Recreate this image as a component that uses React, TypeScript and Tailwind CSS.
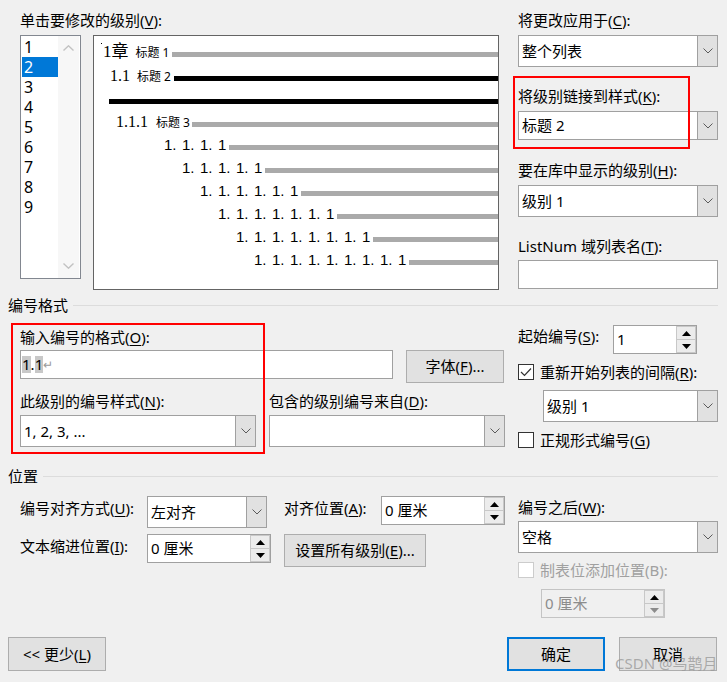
import React from 'react';

const U = ({ children }: { children: React.ReactNode }) => (
  <span className="underline underline-offset-2">{children}</span>
);

const Label = ({ children, className = '' }: { children: React.ReactNode; className?: string }) => (
  <div className={`h-[20px] whitespace-nowrap text-[15px] leading-[20px] ${className}`}>{children}</div>
);

const Chevron = () => (
  <svg width="10" height="6" viewBox="0 0 10 6">
    <path d="M0.5 0.5 L5 5 L9.5 0.5" fill="none" stroke="#5a5a5a" strokeWidth="1" />
  </svg>
);

const Combo = ({ value, className = '' }: { value: string; className?: string }) => (
  <div className={`flex border border-[#a0a0a0] bg-white ${className}`}>
    <div className="flex flex-1 items-center whitespace-nowrap pl-[3px] text-[15px]">{value}</div>
    <div className="flex w-[20px] items-center justify-center border-l border-[#a0a0a0] bg-[#e1e1e1]">
      <Chevron />
    </div>
  </div>
);

const Spin = ({ value, disabled = false, className = '' }: { value: string; disabled?: boolean; className?: string }) => (
  <div
    className={`flex border ${disabled ? 'border-[#c4c4c4] bg-[#f0f0f0] text-[#8c8c8c]' : 'border-[#a0a0a0] bg-white'} ${className}`}
  >
    <div className="flex flex-1 items-center whitespace-nowrap pl-[3px] text-[15px]">{value}</div>
    <div className="flex w-[20px] flex-col">
      <div className="flex flex-1 items-center justify-center border border-[#c8c8c8] bg-[#ececec]">
        <svg width="9" height="5" viewBox="0 0 9 5">
          <polygon points="0,5 4.5,0 9,5" fill="#000" />
        </svg>
      </div>
      <div className="flex flex-1 items-center justify-center border border-t-0 border-[#c8c8c8] bg-[#ececec]">
        <svg width="9" height="5" viewBox="0 0 9 5">
          <polygon points="0,0 4.5,5 9,0" fill={disabled ? '#8c8c8c' : '#000'} />
        </svg>
      </div>
    </div>
  </div>
);

const Btn = ({ children, className = '', primary = false }: { children: React.ReactNode; className?: string; primary?: boolean }) => (
  <button
    type="button"
    className={`flex items-center justify-center whitespace-nowrap bg-[#e1e1e1] text-[15px] ${primary ? 'border-2 border-[#0078d7]' : 'border border-[#adadad]'} ${className}`}
  >
    {children}
  </button>
);

const Check = ({ checked = false, disabled = false }: { checked?: boolean; disabled?: boolean }) => (
  <div
    className={`flex h-[16px] w-[16px] shrink-0 items-center justify-center border bg-white ${disabled ? 'border-[#cccccc]' : 'border-[#333333]'}`}
  >
    {checked && (
      <svg width="12" height="10" viewBox="0 0 12 10">
        <path d="M1 5 L4.5 8.5 L11 1.5" fill="none" stroke="#333" strokeWidth="1.2" />
      </svg>
    )}
  </div>
);

const Group = ({ title }: { title: string }) => (
  <div className="flex h-[20px] items-center pl-[8px] pr-[9px]">
    <span className="text-[15px] leading-[20px]">{title}</span>
    <div className="ml-[5px] h-px flex-1 bg-[#dcdcdc]" />
  </div>
);

const ListBox = () => (
  <div className="flex h-[244px] w-[61px] border border-[#828790] bg-white">
    <div className="flex-1 pl-[1px] pt-[1px]">
      {[1, 2, 3, 4, 5, 6, 7, 8, 9].map((n) => (
        <div
          key={n}
          className={`h-[20px] pl-[2px] text-[16px] leading-[20px] ${n === 2 ? 'bg-[#0078d7] text-white' : ''}`}
        >
          {n}
        </div>
      ))}
    </div>
    <div className="mr-[1px] flex w-[21px] flex-col items-center justify-between bg-[#f7f7f7] py-[9px]">
      <svg width="11" height="6" viewBox="0 0 11 6">
        <path d="M0.5 5.5 L5.5 0.8 L10.5 5.5" fill="none" stroke="#c2c2c2" strokeWidth="1.4" />
      </svg>
      <svg width="11" height="6" viewBox="0 0 11 6">
        <path d="M0.5 0.5 L5.5 5.2 L10.5 0.5" fill="none" stroke="#c2c2c2" strokeWidth="1.4" />
      </svg>
    </div>
  </div>
);

const deepRows = [
  { digits: 4, pad: 'pl-[70px]' },
  { digits: 5, pad: 'pl-[88px]' },
  { digits: 6, pad: 'pl-[106px]' },
  { digits: 7, pad: 'pl-[124px]' },
  { digits: 8, pad: 'pl-[142px]' },
  { digits: 9, pad: 'pl-[160px]' },
];

const Preview = () => (
  <div className="relative h-[255px] w-[406px] border border-[#646464] bg-white pt-[8px] text-black">
    <div className="absolute left-[7px] top-[7px] h-px w-px bg-black" />
    {/* level 1 */}
    <div className="flex h-[24px] items-baseline pl-[9px]">
      <span className="font-['Liberation_Serif','Noto_Sans_CJK_SC',serif] text-[17px] leading-[16px]">1章</span>
      <span className="ml-[7px] text-[12px] leading-[16px]">标题 1</span>
      <div className="ml-[3px] h-[5px] flex-1 bg-[#aaaaaa]" />
    </div>
    {/* level 2 (selected) */}
    <div className="flex h-[23px] items-baseline pl-[16px]">
      <span className="font-['Liberation_Serif',serif] text-[16px] leading-[16px]">1.1</span>
      <span className="ml-[7px] text-[12px] leading-[16px]">标题 2</span>
      <div className="ml-[3px] h-[5px] flex-1 bg-black" />
    </div>
    <div className="flex h-[23px] items-start pl-[15px]">
      <div className="mt-[8px] h-[5px] flex-1 bg-black" />
    </div>
    {/* level 3 */}
    <div className="flex h-[23px] items-baseline pl-[22px]">
      <span className="font-['Liberation_Serif',serif] text-[16px] leading-[16px]">1.1.1</span>
      <span className="ml-[8px] text-[12px] leading-[16px]">标题 3</span>
      <div className="ml-[2px] h-[5px] flex-1 bg-[#aaaaaa]" />
    </div>
    {deepRows.map((r) => (
      <div key={r.digits} className={`flex h-[23px] items-baseline ${r.pad}`}>
        <span className="whitespace-nowrap font-['Liberation_Sans',sans-serif] text-[15px] leading-[16px]">
          {Array.from({ length: r.digits - 1 }).map((_, i) => (
            <span key={i} className="inline-block w-[18px]">
              1.
            </span>
          ))}
          <span>1</span>
        </span>
        <div className="ml-[3px] h-[5px] flex-1 bg-[#aaaaaa]" />
      </div>
    ))}
  </div>
);

export default function App() {
  return (
    <div className="relative h-[682px] w-[727px] overflow-hidden bg-[#f0f0f0] font-['Noto_Sans','Noto_Sans_CJK_SC',sans-serif] text-black">
      {/* top: level list + preview + link options */}
      <div className="flex pt-[10px]">
        <div className="ml-[20px] w-[479px]">
          <Label>
            单击要修改的级别(<U>V</U>):
          </Label>
          <div className="mt-[5px] flex gap-[12px]">
            <ListBox />
            <Preview />
          </div>
        </div>
        <div className="ml-[19px] w-[200px]">
          <Label>
            将更改应用于(<U>C</U>):
          </Label>
          <Combo className="mt-[5px] h-[32px]" value="整个列表" />
          <Label className="mt-[19px]">
            将级别链接到样式(<U>K</U>):
          </Label>
          <Combo className="mt-[5px] h-[29px]" value="标题 2" />
          <Label className="mt-[20px]">
            要在库中显示的级别(<U>H</U>):
          </Label>
          <Combo className="mt-[5px] h-[32px]" value="级别 1" />
          <Label className="mt-[19px]">
            ListNum 域列表名(<U>T</U>):
          </Label>
          <div className="mt-[4px] h-[29px] border border-[#a0a0a0] bg-white" />
        </div>
      </div>

      <div className="mt-[5px]">
        <Group title="编号格式" />
      </div>

      {/* number format */}
      <div className="flex">
        <div className="ml-[20px] w-[485px]">
          <Label className="mt-[12px]">
            输入编号的格式(<U>O</U>):
          </Label>
          <div className="mt-[3px] flex items-start">
            <div className="flex h-[29px] w-[373px] items-center border border-[#a0a0a0] bg-white pl-[1px] text-[15px]">
              <span className="bg-[#c8c8c8] leading-[17px]">1</span>
              <span className="leading-[17px]">.</span>
              <span className="bg-[#c8c8c8] leading-[17px]">1</span>
              <span className="text-[12px] leading-[17px] text-[#9a9a9a]">↵</span>
            </div>
            <Btn className="ml-[13px] h-[33px] w-[98px]">
              字体(<U>F</U>)...
            </Btn>
          </div>
          <div className="mt-[8px] flex gap-[13px]">
            <div className="w-[236px]">
              <Label>
                此级别的编号样式(<U>N</U>):
              </Label>
              <Combo className="mt-[4px] h-[32px]" value="1, 2, 3, ..." />
            </div>
            <div className="w-[236px]">
              <Label>
                包含的级别编号来自(<U>D</U>):
              </Label>
              <Combo className="mt-[4px] h-[32px]" value="" />
            </div>
          </div>
        </div>
        <div className="ml-[13px] w-[200px]">
          <div className="mt-[10px] flex items-start">
            <Label className="mt-[1px] w-[95px]">
              起始编号(<U>S</U>):
            </Label>
            <Spin className="h-[29px] w-[84px]" value="1" />
          </div>
          <div className="mt-[8px] flex h-[20px] items-center">
            <Check checked />
            <Label className="ml-[6px]">
              重新开始列表的间隔(<U>R</U>):
            </Label>
          </div>
          <Combo className="ml-[25px] mt-[8px] h-[32px] w-[175px]" value="级别 1" />
          <div className="mt-[8px] flex h-[20px] items-center">
            <Check />
            <Label className="ml-[6px]">
              正规形式编号(<U>G</U>)
            </Label>
          </div>
        </div>
      </div>

      <div className="mt-[16px]">
        <Group title="位置" />
      </div>

      {/* position */}
      <div className="flex">
        <div className="ml-[20px] w-[485px]">
          <div className="mt-[10px] flex items-start">
            <Label className="mt-[2px] w-[127px]">
              编号对齐方式(<U>U</U>):
            </Label>
            <Combo className="h-[32px] w-[120px]" value="左对齐" />
            <Label className="ml-[17px] mt-[2px] w-[97px]">
              对齐位置(<U>A</U>):
            </Label>
            <Spin className="h-[29px] w-[124px]" value="0 厘米" />
          </div>
          <div className="mt-[6px] flex items-start">
            <Label className="mt-[2px] w-[127px]">
              文本缩进位置(<U>I</U>):
            </Label>
            <Spin className="h-[29px] w-[124px]" value="0 厘米" />
            <Btn className="ml-[13px] h-[33px] w-[142px]">
              设置所有级别(<U>E</U>)...
            </Btn>
          </div>
        </div>
        <div className="ml-[13px] w-[200px]">
          <Label className="mt-[11px]">
            编号之后(<U>W</U>):
          </Label>
          <Combo className="mt-[4px] h-[32px]" value="空格" />
          <div className="mt-[7px] flex h-[20px] items-center">
            <Check disabled />
            <Label className="ml-[6px] text-[#a0a0a0]">制表位添加位置(B):</Label>
          </div>
          <Spin disabled className="ml-[23px] mt-[9px] h-[29px] w-[124px]" value="0 厘米" />
        </div>
      </div>

      {/* buttons */}
      <div className="mt-[19px] flex pl-[8px]">
        <Btn className="h-[34px] w-[98px]">
          &lt;&lt; 更少(<U>L</U>)
        </Btn>
        <Btn primary className="ml-[401px] h-[34px] w-[98px]">
          确定
        </Btn>
        <Btn className="ml-[14px] h-[34px] w-[98px]">取消</Btn>
      </div>

      {/* annotation boxes */}
      <div className="absolute left-[513px] top-[76px] h-[73px] w-[177px] border-2 border-[#ff0000]" />
      <div className="absolute left-[11px] top-[323px] h-[131px] w-[254px] border-2 border-[#ff0000]" />

      {/* watermark */}
      <div className="absolute left-[615px] top-[654px] whitespace-nowrap text-[15px] leading-[18px] text-[#9a9a9a]/80">
        CSDN @乌鹊月
      </div>
    </div>
  );
}
